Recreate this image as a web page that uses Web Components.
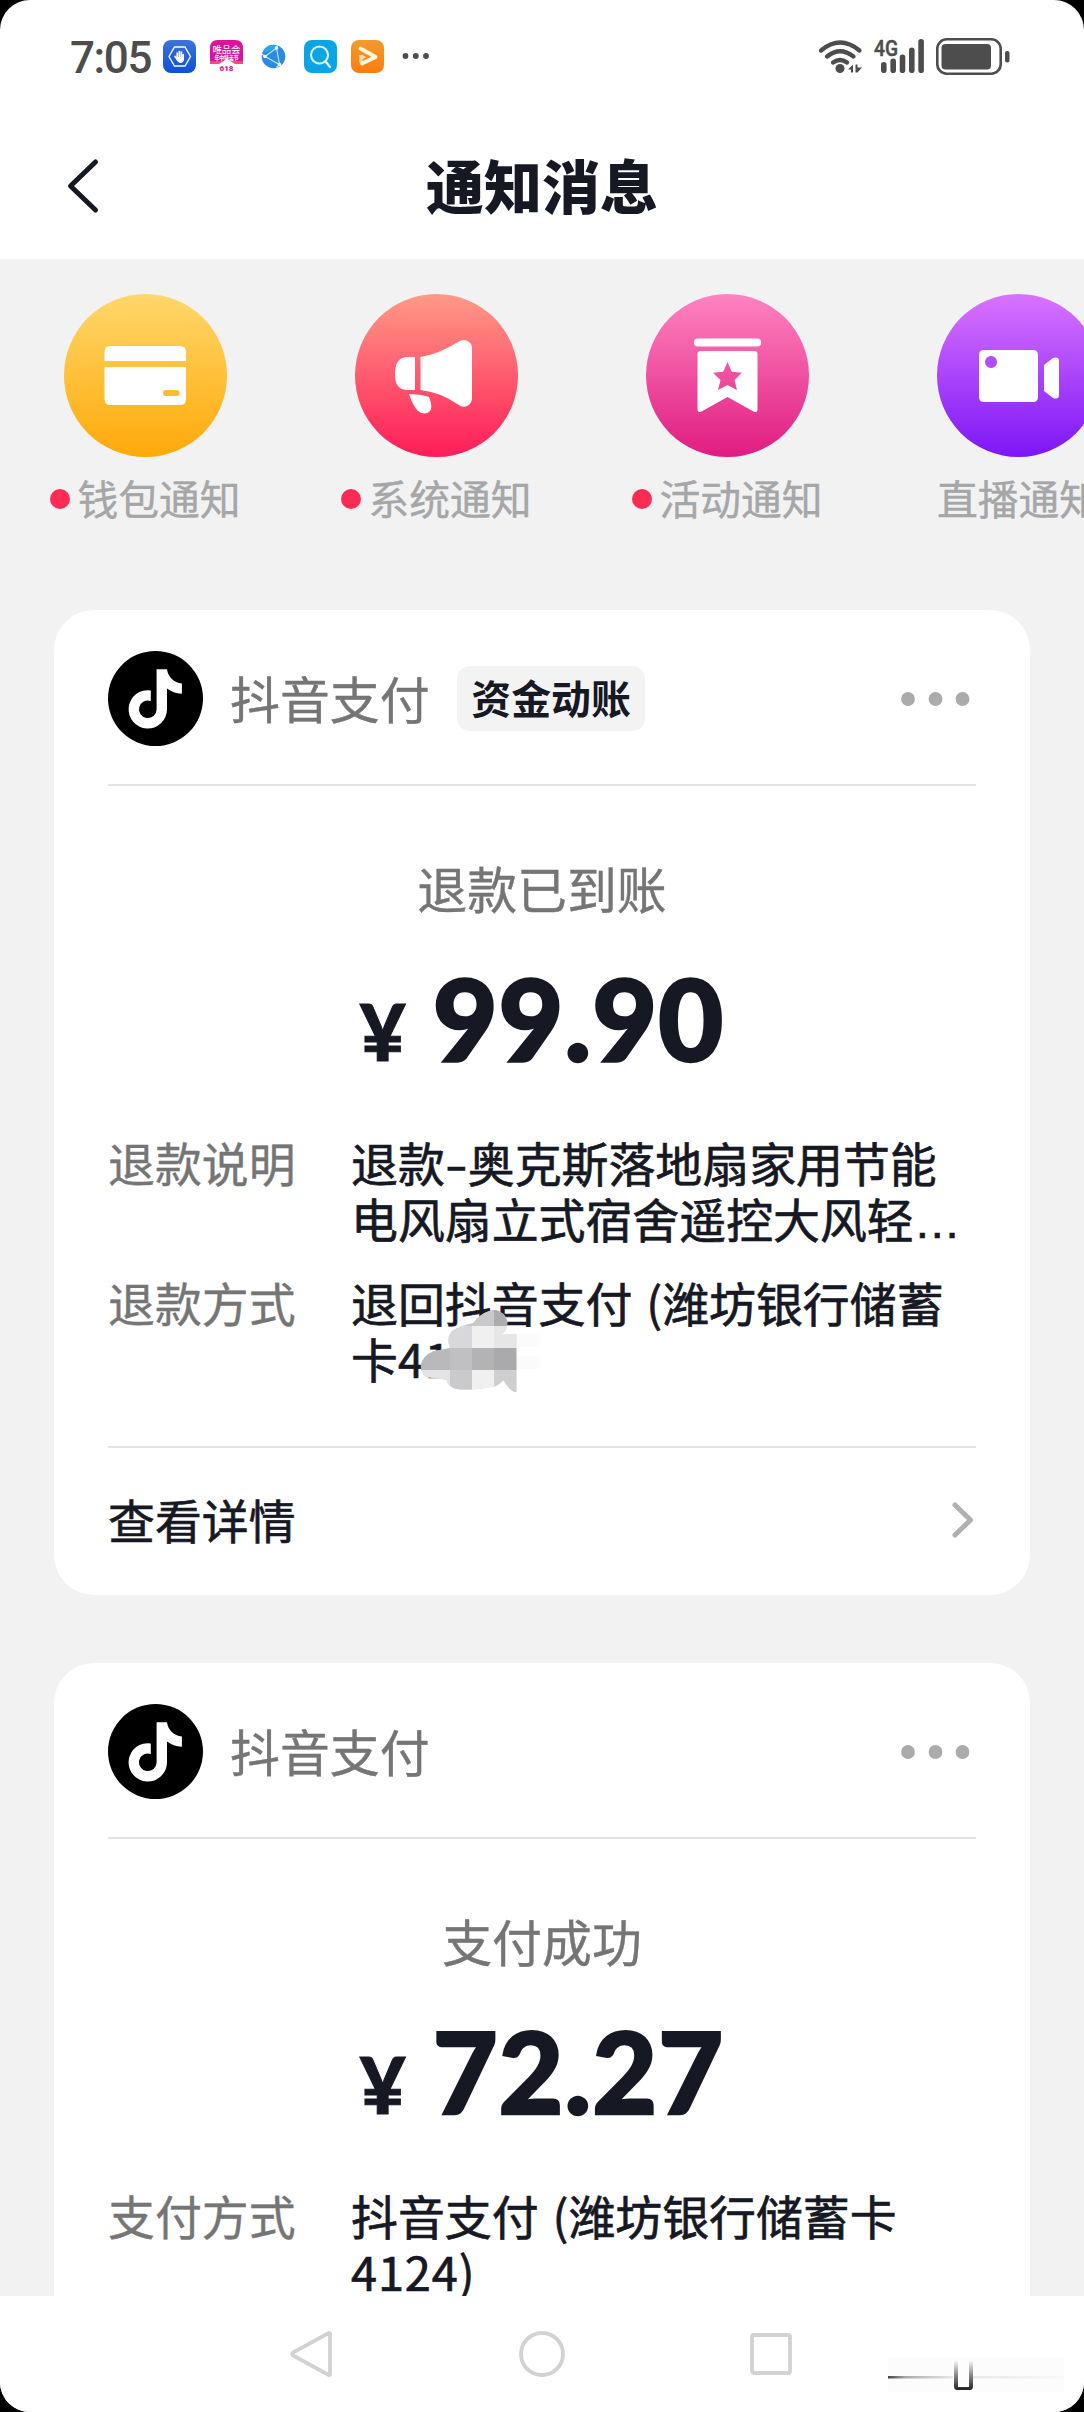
<!DOCTYPE html>
<html lang="zh-CN">
<head>
<meta charset="utf-8">
<title>通知消息</title>
<style>
  html, body { margin: 0; background: #000; }
  body { width: 1084px; height: 2412px; overflow: hidden; font-family: "Noto Sans CJK SC", sans-serif; color: #161823; }
</style>
</head>
<body>
<notice-screen></notice-screen>

<script>
const define = (name, html) => {
  const tpl = document.createElement('template');
  tpl.innerHTML = html;
  customElements.define(name, class extends HTMLElement {
    constructor() {
      super();
      this.attachShadow({ mode: 'open' }).append(tpl.content.cloneNode(true));
    }
  });
};

define('status-bar', `
<style>
  :host { display: flex; height: 112px; box-sizing: border-box; padding: 0 74px 0 70px; align-items: center; justify-content: space-between; }
  .l, .r { display: flex; align-items: center; }
  .time { font: 500 44px/50px Roboto, sans-serif; color: #4d4d4d; letter-spacing: -1.4px; width: 93px; padding-top: 3px; white-space: nowrap; }
  .apps { display: flex; gap: 14px; }
  .more { margin-left: 18px; }
  .net { margin-left: 11px; }
  .bat { margin-left: 11px; }
  svg { display: block; overflow: visible; }
</style>
<div class="l">
  <span class="time">7:05</span>
  <div class="apps">
    <svg width="33" height="33" viewBox="0 0 33 33"><defs><linearGradient id="b" x2="0" y2="1"><stop stop-color="#3d74d8"/><stop offset="1" stop-color="#0d50d8"/></linearGradient></defs><rect width="33" height="33" rx="8" fill="url(#b)"/><path d="M11.500 7h10.500l5.500 9.500-5.500 9.500h-10.500L6 16.500z" fill="none" stroke="#fff" stroke-width="1.300"/><path d="M14.200 13v5M16.300 11.500v6M18.400 12v6M12 16.500l3 4M20.200 14.500v4" stroke="#fff" stroke-width="1.700" stroke-linecap="round"/><path d="M13.400 17h7.600v3q-1 3-3.500 3t-4.100-4z" fill="#fff"/></svg>
    <svg width="33" height="33" viewBox="0 0 33 33"><path d="M8 0h17q8 0 8 8v16H0V8q0-8 8-8z" fill="#d8149a"/><path d="M0 21q9 1 14-1l3-2 3 2q5 2 13 1v3H0z" fill="#f0506a"/><path d="M9 24l8-5 8 5z" fill="#fff"/><text x="16.500" y="12.500" text-anchor="middle" textLength="28" font-family="Noto Sans CJK SC, sans-serif" font-size="9.500" fill="#fff">唯品会</text><text x="16.500" y="19.500" text-anchor="middle" textLength="24" lengthAdjust="spacingAndGlyphs" font-family="Noto Sans CJK SC, sans-serif" font-weight="700" font-size="6" fill="#fff">年中特卖节</text><text x="16.500" y="31" text-anchor="middle" font-family="Roboto, sans-serif" font-weight="900" font-size="8" fill="#d8148c">618</text></svg>
    <svg width="33" height="33" viewBox="0 0 33 33"><circle cx="16.500" cy="16.500" r="11.800" fill="#2b8be0"/><path d="M6 13a12 12 0 0 1 14-8l-1 4z" fill="#23a8e8"/><path d="M8 16.500L19.500 8l3 16.500zM19.500 8l1-3M22.500 24.500l-3 3M5 14l3 2.500" fill="none" stroke="#bfe4fb" stroke-width="1.200"/><circle cx="8" cy="16.500" r="1.800" fill="#fff"/><circle cx="19.500" cy="8" r="1.800" fill="#fff"/><circle cx="22.500" cy="24.500" r="1.800" fill="#fff"/></svg>
    <svg width="33" height="33" viewBox="0 0 33 33"><rect width="33" height="33" rx="8" fill="#0ba5e4"/><circle cx="15.500" cy="15" r="8.500" fill="none" stroke="#e8fbff" stroke-width="2"/><path d="M21.500 21.500l4.500 5.500" stroke="#e8fbff" stroke-width="2.200" stroke-linecap="round"/></svg>
    <svg width="33" height="33" viewBox="0 0 33 33"><defs><linearGradient id="o" x2="0" y2="1"><stop stop-color="#f39a2f"/><stop offset="1" stop-color="#fb7d0c"/></linearGradient></defs><rect width="33" height="33" rx="8" fill="url(#o)"/><path d="M10 15v7.500" stroke="#fbd8a4" stroke-width="3.400"/><path d="M9.500 8.500L24.500 17 11 23.500" fill="none" stroke="#fff6df" stroke-width="3.800" stroke-linejoin="round" stroke-linecap="round"/><path d="M11 14.500v5l4.500-2z" fill="#fbd8a4"/></svg>
  </div>
  <svg class="more" width="28" height="8" viewBox="0 0 28 8" fill="#4d4d4d"><circle cx="3.500" cy="4" r="2.900"/><circle cx="13.800" cy="4" r="2.900"/><circle cx="24" cy="4" r="2.900"/></svg>
</div>
<div class="r">
  <svg width="45" height="36" viewBox="0 0 45 36" fill="none" stroke="#4d4d4d" stroke-width="4.300" stroke-linecap="round"><path d="M3 12.500Q22 -3.500 41.500 12.500M9 18.500Q22 8 35.500 18.500M15 24.500q7-5 14 0"/><circle cx="22" cy="30.500" r="4.500" fill="#4d4d4d" stroke="none"/><path d="M30 31.500l5-5v8h-2v-3zM37.500 26.500h2v3h4.500l-4.500 5h-2z" fill="#4d4d4d" stroke="none"/></svg>
  <svg class="net" width="51" height="36" viewBox="0 0 51 36" fill="#4d4d4d"><text x="0" y="17.500" textLength="24" lengthAdjust="spacingAndGlyphs" font-family="Roboto, sans-serif" font-weight="500" font-size="22" stroke="#4d4d4d" stroke-width=".5">4G</text><rect x="7" y="24" width="5.600" height="11" rx="2.800"/><rect x="16.400" y="20.500" width="5.600" height="14.500" rx="2.800"/><rect x="25.700" y="16.500" width="5.600" height="18.500" rx="2.800"/><rect x="35" y="9.500" width="5.600" height="25.500" rx="2.800"/><rect x="44.300" y="1" width="5.600" height="34" rx="2.800"/></svg>
  <svg class="bat" width="74" height="37" viewBox="0 0 74 37"><rect x="1.300" y="1.300" width="63.400" height="34.400" rx="9.500" fill="none" stroke="#4d4d4d" stroke-width="2.600"/><rect x="5.500" y="6" width="49.500" height="25.500" rx="4" fill="#4d4d4d"/><rect x="69" y="13" width="4.500" height="11.500" rx="2" fill="#4d4d4d"/></svg>
</div>`);

define('title-bar', `
<style>
  :host { display: grid; grid-template-columns: 1fr auto 1fr; height: 147px; align-items: center; }
  h1 { margin: 0; font-weight: 900; font-size: 58px; line-height: 70px; padding-bottom: 3px; color: #161823; }
  svg { display: block; margin-left: 64px; }
</style>
<svg width="36" height="56" viewBox="0 0 36 56"><path d="M31.500 4L6.500 28l25 24" fill="none" stroke="#161823" stroke-width="5" stroke-linecap="round" stroke-linejoin="round"/></svg>
<h1><slot></slot></h1>`);

define('notice-category', `
<style>
  :host { display: flex; flex: none; flex-direction: column; align-items: center; width: 163px; }
  .icon { width: 163px; height: 163px; border-radius: 50%; background: linear-gradient(var(--from), var(--to)); }
  .label { display: flex; align-items: center; gap: 7px; margin-top: 16px; font-size: 40.800px; line-height: 50px; color: #a5a6a8; white-space: nowrap; -webkit-text-stroke: .4px #a5a6a8; }
  :host([unread]) .label::before { content: ""; width: 20px; height: 20px; border-radius: 50%; background: #fe2c55; margin-top: 2px; }
</style>
<div class="icon"><slot name="icon"></slot></div>
<div class="label"><slot></slot></div>`);

define('category-strip', `
<style>
  :host { display: flex; gap: 128px; height: 351px; box-sizing: border-box; padding: 35px 0 0 64px; overflow: hidden; }
  svg { display: block; }
</style>
<notice-category unread style="--from:#ffd76a;--to:#ffa90a">
  <svg slot="icon" width="163" height="163" viewBox="0 0 163 163"><path d="M40.500 67v-9q0-6 6-6h69.500q6 0 6 6v9z" fill="#fff"/><path fill-rule="evenodd" d="M40.500 73h81.500v32q0 6-6 6H46.500q-6 0-6-6zM102 96a3 3 0 0 0 0 6h10.500a3 3 0 0 0 0-6z" fill="#fff"/></svg>钱包通知
</notice-category>
<notice-category unread style="--from:#ff9a86;--to:#ff1c58">
  <svg slot="icon" width="163" height="163" viewBox="0 0 163 163" fill="#fff"><path d="M60 63v33h-7C43 96 40 90 40 80s3-17 13-17z"/><path d="M65.500 63Q84 60 103 48q6-4 11 0 3 2 3 6v50q0 5-4 7.500-5 3-10-1Q85 98 65.500 96z"/><path d="M54 100l13 1 7 2q4 10 1 14-5 5-12 0-5-5-9-17z"/></svg>系统通知
</notice-category>
<notice-category unread style="--from:#ff83c0;--to:#e01c80">
  <svg slot="icon" width="163" height="163" viewBox="0 0 163 163"><rect x="48" y="44.500" width="67" height="8" rx="3.500" fill="#fff"/><path fill-rule="evenodd" d="M54.500 57h54q3 0 3 3v55q0 4.500-4 2.500L81.500 103 55.500 117.500q-4 2-4-2.500V60q0-3 3-3zM81.500 68l4.300 9.700 10.200 1-7.500 7.200 2.500 10.100-9.500-5-9.500 5 2.500-10.100-7.500-7.200 10.200-1z" fill="#fff"/></svg>活动通知
</notice-category>
<notice-category style="--from:#d873ff;--to:#7d16f6">
  <svg slot="icon" width="163" height="163" viewBox="0 0 163 163" fill="#fff"><path fill-rule="evenodd" d="M47 56h49q5 0 5 5v42q0 5-5 5H47q-5 0-5-5V61q0-5 5-5zM54 62a6 6 0 1 0 .1 0z"/><path d="M107 71l9-7q6-2 6 3v34q0 5-6 3l-9-7z"/></svg>直播通知
</notice-category>`);

define('notice-card', `
<style>
  :host { display: block; flex: none; background: #fff; border-radius: 40px; margin: 0 54px; padding: 0 54px; }
  header { display: flex; align-items: center; box-sizing: border-box; padding-top: 3px; border-bottom: 2px solid #e3e3e4; height: 176px; }
  .logo { flex: none; }
  .name { margin-left: 27px; font-size: 49.900px; line-height: 60px; color: #757575; padding-bottom: 4px; white-space: nowrap; -webkit-text-stroke: .4px #757575; }
  ::slotted([slot=tag]) { margin-left: 27.500px; }
  .dots { margin-left: auto; margin-right: 6px; }
  .sub { margin-top: 71px; text-align: center; font-size: 49.900px; line-height: 60px; color: #757575; -webkit-text-stroke: .4px #757575; }
  .amount { display: flex; justify-content: center; align-items: baseline; gap: 27px; margin-top: 51px; height: 100px; font: 900 112px/100px Lato, sans-serif; letter-spacing: 1px; color: #161823; -webkit-text-stroke: 2.400px #161823; }
  .yen { font-size: 79px; letter-spacing: 0; line-height: 80px; -webkit-text-stroke: 1px #161823; }
  .rows { display: flex; flex-direction: column; gap: 28px; margin-top: 66px; }
  svg { display: block; }
</style>
<header>
  <svg class="logo" width="95" height="95" viewBox="0 0 95 95"><circle cx="47.500" cy="47.500" r="47.500"/><path d="M48.600 18.300H59C60 26 66 32 73.900 32.500V42.700C68 42.700 63 40.500 59 37.500V58.500A19.200 19.200 0 1 1 42.800 39.400V50A8.800 8.800 0 1 0 48.600 58.500Z" fill="#fff"/></svg>
  <span class="name"><slot name="name"></slot></span>
  <slot name="tag"></slot>
  <svg class="dots" width="70" height="14" viewBox="0 0 70 14" fill="#ababab"><circle cx="8" cy="7" r="6.900"/><circle cx="35.500" cy="7" r="6.900"/><circle cx="62.500" cy="7" r="6.900"/></svg>
</header>
<div class="sub"><slot name="subtitle"></slot></div>
<div class="amount"><span class="yen">¥</span><slot name="amount"></slot></div>
<div class="rows"><slot></slot></div>
<slot name="footer"></slot>`);

define('notice-tag', `
<style>
  :host { display: block; box-sizing: border-box; width: 188px; height: 65px; padding-top: 1px; border-radius: 13px; background: #f3f3f4; color: #161823; font-weight: 700; font-size: 39.900px; line-height: 60px; text-align: center; white-space: nowrap; }
</style><slot></slot>`);

define('detail-row', `
<style>
  :host { display: flex; font-size: 46.900px; line-height: 56px; height: var(--rows-height, 112px); }
  .label { width: 243px; flex: none; color: #757575; -webkit-text-stroke: .4px #757575; }
  .value { position: relative; white-space: nowrap; color: #161823; word-spacing: 3.500px; -webkit-text-stroke: .7px #161823; }
</style>
<div class="label"><slot name="label"></slot></div>
<div class="value"><slot></slot></div>`);

/* Pixelated smudge that covers the tail of a card number */
define('mosaic-mask', `
<style>
  :host { position: absolute; left: 69px; top: 35px; width: 125px; height: 86px; }
  svg { display: block; }
</style>
<svg width="125" height="86" viewBox="1020 598 375 258">
  <defs><clipPath id="s"><path d="M1240 600Q1275 605 1282 635Q1283 662 1265 675L1310 672V848Q1290 846 1270 812Q1255 830 1235 832Q1150 846 1120 835Q1100 825 1100 810Q1050 806 1035 800Q1022 790 1022 765Q1030 738 1060 725L1110 715Q1098 685 1115 665Q1135 650 1180 640Q1200 610 1240 600Z"/></clipPath></defs>
  <rect x="1310" y="672" width="68" height="40" fill="#fbfbfb"/><rect x="1310" y="740" width="68" height="38" fill="#fbfbfb"/>
  <g clip-path="url(#s)" shape-rendering="crispEdges">
    <rect x="1020" y="598" width="300" height="258" fill="#dcdcde"/>
    <rect x="1110" y="598" width="133" height="50" fill="#c9c9cb"/><rect x="1243" y="598" width="70" height="50" fill="#acacae"/>
    <rect x="1090" y="648" width="85" height="66" fill="#d8d8da"/><rect x="1175" y="648" width="68" height="66" fill="#f0f0f1"/><rect x="1243" y="648" width="70" height="66" fill="#e6e6e7"/>
    <rect x="1020" y="714" width="90" height="66" fill="#b9b9bc"/><rect x="1110" y="714" width="65" height="66" fill="#c0c0c3"/><rect x="1175" y="714" width="68" height="66" fill="#b3b3b6"/><rect x="1243" y="714" width="70" height="66" fill="#aaaaac"/>
    <rect x="1020" y="780" width="90" height="70" fill="#e3e3e5"/><rect x="1110" y="780" width="65" height="70" fill="#cacacd"/><rect x="1175" y="780" width="68" height="70" fill="#f0f0f1"/><rect x="1243" y="780" width="70" height="70" fill="#cfcfd1"/>
  </g>
</svg>`);

define('card-link', `
<style>
  :host { display: flex; justify-content: space-between; align-items: center; height: 147px; margin-top: 60px; border-top: 2px solid #e3e3e4; font-size: 46.900px; line-height: 56px; color: #161823; -webkit-text-stroke: .6px #161823; }
  span { padding-bottom: 5px; }
  svg { display: block; margin-bottom: 3px; }
</style>
<span><slot></slot></span>
<svg width="28" height="42" viewBox="0 0 28 42"><path d="M7 6l15.500 15L7 36" fill="none" stroke="#b0b0b1" stroke-width="5" stroke-linecap="round" stroke-linejoin="round"/></svg>`);

define('system-nav', `
<style>
  :host { display: flex; height: 116px; box-sizing: border-box; padding: 33px 0 0 289px; background: #fff; }
  svg { display: block; flex: none; }
  .home { margin-left: 182px; }
  .recent { margin-left: 182px; }
  .mark { margin: 27px 0 0 93px; }
</style>
<svg width="46" height="50" viewBox="0 0 46 50"><path d="M41 4.500v41q-1 1-2 0L4 26.500q-1.500-1.500 0-3L39 4.500q1-1 2 0z" fill="none" stroke="#d2d2d2" stroke-width="3.800"/></svg>
<svg class="home" width="50" height="50" viewBox="0 0 50 50"><circle cx="25" cy="25" r="21" fill="none" stroke="#d2d2d2" stroke-width="3.800"/></svg>
<svg class="recent" width="46" height="50" viewBox="0 0 46 50"><rect x="3" y="6" width="38" height="38" rx="2" fill="none" stroke="#d2d2d2" stroke-width="3.800"/></svg>
<svg class="mark" width="178" height="38" viewBox="0 0 178 38"><defs>
  <linearGradient id="h"><stop stop-color="#444"/><stop offset=".1" stop-color="#aaa"/><stop offset=".35" stop-color="#e4e4e4"/><stop offset="1" stop-color="#f8f8f8"/></linearGradient>
  <linearGradient id="v" x2="0" y2="1"><stop stop-color="#fff"/><stop offset=".5" stop-color="#888"/><stop offset="1" stop-color="#222"/></linearGradient></defs>
  <rect y="2" width="176" height="34" fill="#fcfcfc"/><rect y="20" width="176" height="2.500" fill="url(#h)"/>
  <rect x="65" y="4" width="20" height="30" fill="#fdfdfd"/><path d="M66 4h4v27h11V4h4v26q0 4-3 4H69q-3 0-3-4z" fill="url(#v)"/></svg>`);

define('notice-screen', `
<style>
  :host { display: flex; flex-direction: column; width: 1084px; height: 2412px; overflow: hidden; border-radius: 30px; background: #fff; }
  main { height: 2037px; flex: none; overflow: hidden; background: #f2f2f2; }
  .cards { display: flex; flex-direction: column; gap: 68px; }
  .tail { height: 60px; }
  .hyphen { display: inline-block; width: 23px; text-align: center; transform: scaleX(1.4); }
  .ellipsis { font-family: "Liberation Sans", sans-serif; line-height: 1; }
  .num { letter-spacing: .9px; }
</style>
<status-bar></status-bar>
<title-bar>通知消息</title-bar>
<main>
  <category-strip></category-strip>
  <div class="cards">
    <notice-card>
      <span slot="name">抖音支付</span>
      <notice-tag slot="tag">资金动账</notice-tag>
      <span slot="subtitle">退款已到账</span>
      <span slot="amount">99.90</span>
      <detail-row><span slot="label">退款说明</span>退款<span class="hyphen">-</span>奥克斯落地扇家用节能<br>电风扇立式宿舍遥控大风轻<span class="ellipsis">…</span></detail-row>
      <detail-row><span slot="label">退款方式</span>退回抖音支付 (潍坊银行储蓄<br>卡<span class="num">41</span><mosaic-mask></mosaic-mask></detail-row>
      <card-link slot="footer">查看详情</card-link>
    </notice-card>
    <notice-card>
      <span slot="name">抖音支付</span>
      <span slot="subtitle">支付成功</span>
      <span slot="amount">72.27</span>
      <detail-row><span slot="label">支付方式</span>抖音支付 (潍坊银行储蓄卡<br><span class="num">4124)</span></detail-row>
      <div slot="footer" class="tail"></div>
    </notice-card>
  </div>
</main>
<system-nav></system-nav>`);
</script>
</body>
</html>
